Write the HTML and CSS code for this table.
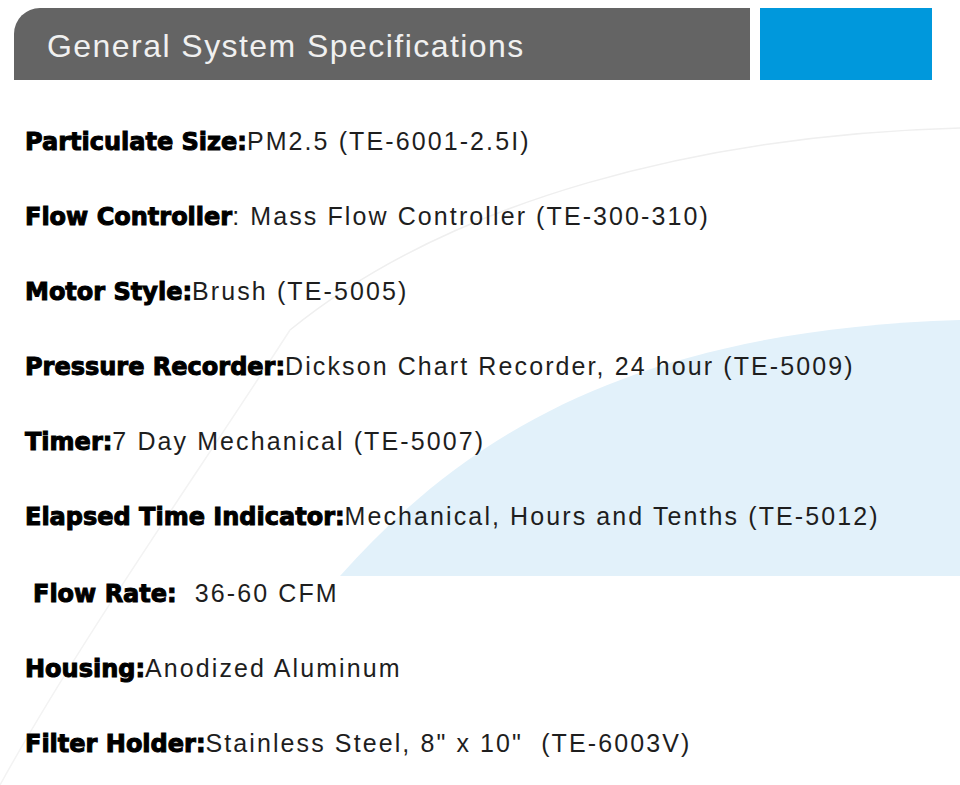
FILE: index.html
```html
<!DOCTYPE html>
<html>
<head>
<meta charset="utf-8">
<link rel="stylesheet" href="styles.css">
</head>
<body>
<div class="page">
  <svg class="bg" width="960" height="785" viewBox="0 0 960 785">
    <path d="M340 576 C 470 430, 640 330, 960 320 L 960 576 Z" fill="#e2f1fa"/>
    <path d="M290 330 C 450 200, 700 135, 960 128" fill="none" stroke="#efefef" stroke-width="1.5"/>
    <path d="M0 785 C 80 640, 200 470, 290 330" fill="none" stroke="#f3f3f3" stroke-width="1.5"/>
  </svg>
  <header class="head">
    <div class="title"><h1>General System Specifications</h1></div>
    <div class="accent"></div>
  </header>
  <ul class="specs">
    <li><b>Particulate Size:</b>PM2.5 (TE-6001-2.5I)</li>
    <li><b>Flow Controller</b>: Mass Flow Controller (TE-300-310)</li>
    <li><b>Motor Style:</b>Brush (TE-5005)</li>
    <li><b>Pressure Recorder:</b>Dickson Chart Recorder, 24 hour (TE-5009)</li>
    <li><b>Timer:</b>7 Day Mechanical (TE-5007)</li>
    <li><b>Elapsed Time Indicator:</b>Mechanical, Hours and Tenths (TE-5012)</li>
    <li class="indent"><b>Flow Rate:</b>&nbsp; 36-60 CFM</li>
    <li><b>Housing:</b>Anodized Aluminum</li>
    <li><b>Filter Holder:</b>Stainless Steel, 8" x 10"&nbsp; (TE-6003V)</li>
  </ul>
</div>
</body>
</html>
```
FILE: styles.css
```css
html, body { margin: 0; padding: 0; background: #fff; }
.page {
  position: relative;
  width: 960px;
  height: 785px;
  overflow: hidden;
  font-family: "Liberation Sans", Arial, sans-serif;
}
.bg { position: absolute; left: 0; top: 0; }
.head {
  position: relative;
  display: flex;
  gap: 10px;
  padding: 8px 0 0 14px;
  height: 72px;
}
.title {
  width: 736px;
  background: #646464;
  border-top-left-radius: 26px;
  display: flex;
  align-items: center;
}
.title h1 {
  margin: 4px 0 0 33px;
  font-weight: normal;
  font-size: 32px;
  color: #f0f0f0;
  letter-spacing: 1.45px;
}
.accent { width: 172px; background: #0098dc; }
.specs {
  position: relative;
  list-style: none;
  margin: 0;
  padding: 24px 0 0 25px;
}
.specs li {
  height: 75px;
  line-height: 75px;
  font-size: 25px;
  letter-spacing: 2.1px;
  color: #1e1e1e;
  white-space: nowrap;
}
.specs li:nth-child(7) { height: 77px; line-height: 79px; }
.specs b {
  font-family: "DejaVu Sans", sans-serif;
  font-weight: bold;
  font-size: 24px;
  letter-spacing: 0px;
  color: #000;
  -webkit-text-stroke: 1px #000;
}
.specs .indent { padding-left: 8px; }
```
